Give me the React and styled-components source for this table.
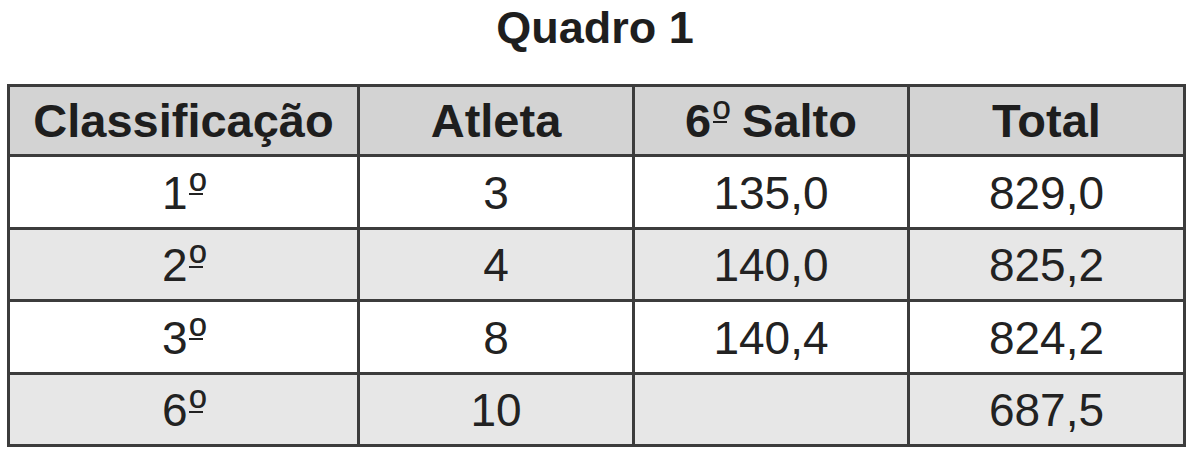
import React from "react";
import styled, { createGlobalStyle } from "styled-components";

const Global = createGlobalStyle`
  html, body { margin: 0; padding: 0; background: #ffffff; }
  body { font-family: "Liberation Sans", Arial, sans-serif; color: #222; }
`;

const Page = styled.div`
  width: 1200px;
  height: 466px;
  box-sizing: border-box;
  padding: 0 0 0 7px;
`;

const Title = styled.h2`
  margin: 0;
  height: 84px;
  width: 1176px;
  display: flex;
  align-items: flex-start;
  justify-content: center;
  padding-top: 5px;
  box-sizing: border-box;
  font-size: 45px;
  font-weight: 700;
  line-height: 45px;
  color: #1e1e1e;
`;

const Table = styled.table`
  border-collapse: collapse;
  table-layout: fixed;
  width: 1176px;
  border: 3px solid #3c3c3c;
`;

const Col = styled.col`
  width: ${(p) => p.$w}px;
`;

const HeadCell = styled.th`
  background: #d3d3d3;
  height: 67px;
  padding: 0;
  border: 3px solid #3c3c3c;
  font-size: 47px;
  font-weight: 700;
  color: #1e1e1e;
  text-align: center;
  vertical-align: middle;
`;

const Row = styled.tr`
  background: ${(p) => (p.$striped ? "#e7e7e7" : "#ffffff")};
`;

const Cell = styled.td`
  height: 67.5px;
  padding: 2px 0 0 0;
  border: 3px solid #3c3c3c;
  font-size: 46px;
  font-weight: 400;
  color: #222;
  text-align: center;
  vertical-align: middle;
`;

const Ord = styled.span`
  display: inline-block;
  font-size: 1em;
  font-weight: 400;
  line-height: 1;
  height: 0.58em;
  border-bottom: 2px solid currentColor;
  vertical-align: 3px;
  margin: 0 0.04em 0 0.04em;
  width: 0.3em;
  text-align: center;
  overflow: visible;
`;

const withOrd = (text) => {
  const idx = text.indexOf("º");
  if (idx === -1) return text;
  return (
    <>
      {text.slice(0, idx)}
      <Ord>º</Ord>
      {text.slice(idx + 1)}
    </>
  );
};

const rows = [
  ["1º", "3", "135,0", "829,0"],
  ["2º", "4", "140,0", "825,2"],
  ["3º", "8", "140,4", "824,2"],
  ["6º", "10", "", "687,5"],
];

const headers = ["Classificação", "Atleta", "6º Salto", "Total"];
const widths = [350, 275, 275, 276];

export default function App() {
  return (
    <Page>
      <Global />
      <Title>Quadro 1</Title>
      <Table>
        <colgroup>
          {widths.map((w, i) => (
            <Col key={i} $w={w} />
          ))}
        </colgroup>
        <thead>
          <tr>
            {headers.map((h) => (
              <HeadCell key={h}>{withOrd(h)}</HeadCell>
            ))}
          </tr>
        </thead>
        <tbody>
          {rows.map((r, i) => (
            <Row key={i} $striped={i % 2 === 1}>
              {r.map((c, j) => (
                <Cell key={j}>{withOrd(c)}</Cell>
              ))}
            </Row>
          ))}
        </tbody>
      </Table>
    </Page>
  );
}
